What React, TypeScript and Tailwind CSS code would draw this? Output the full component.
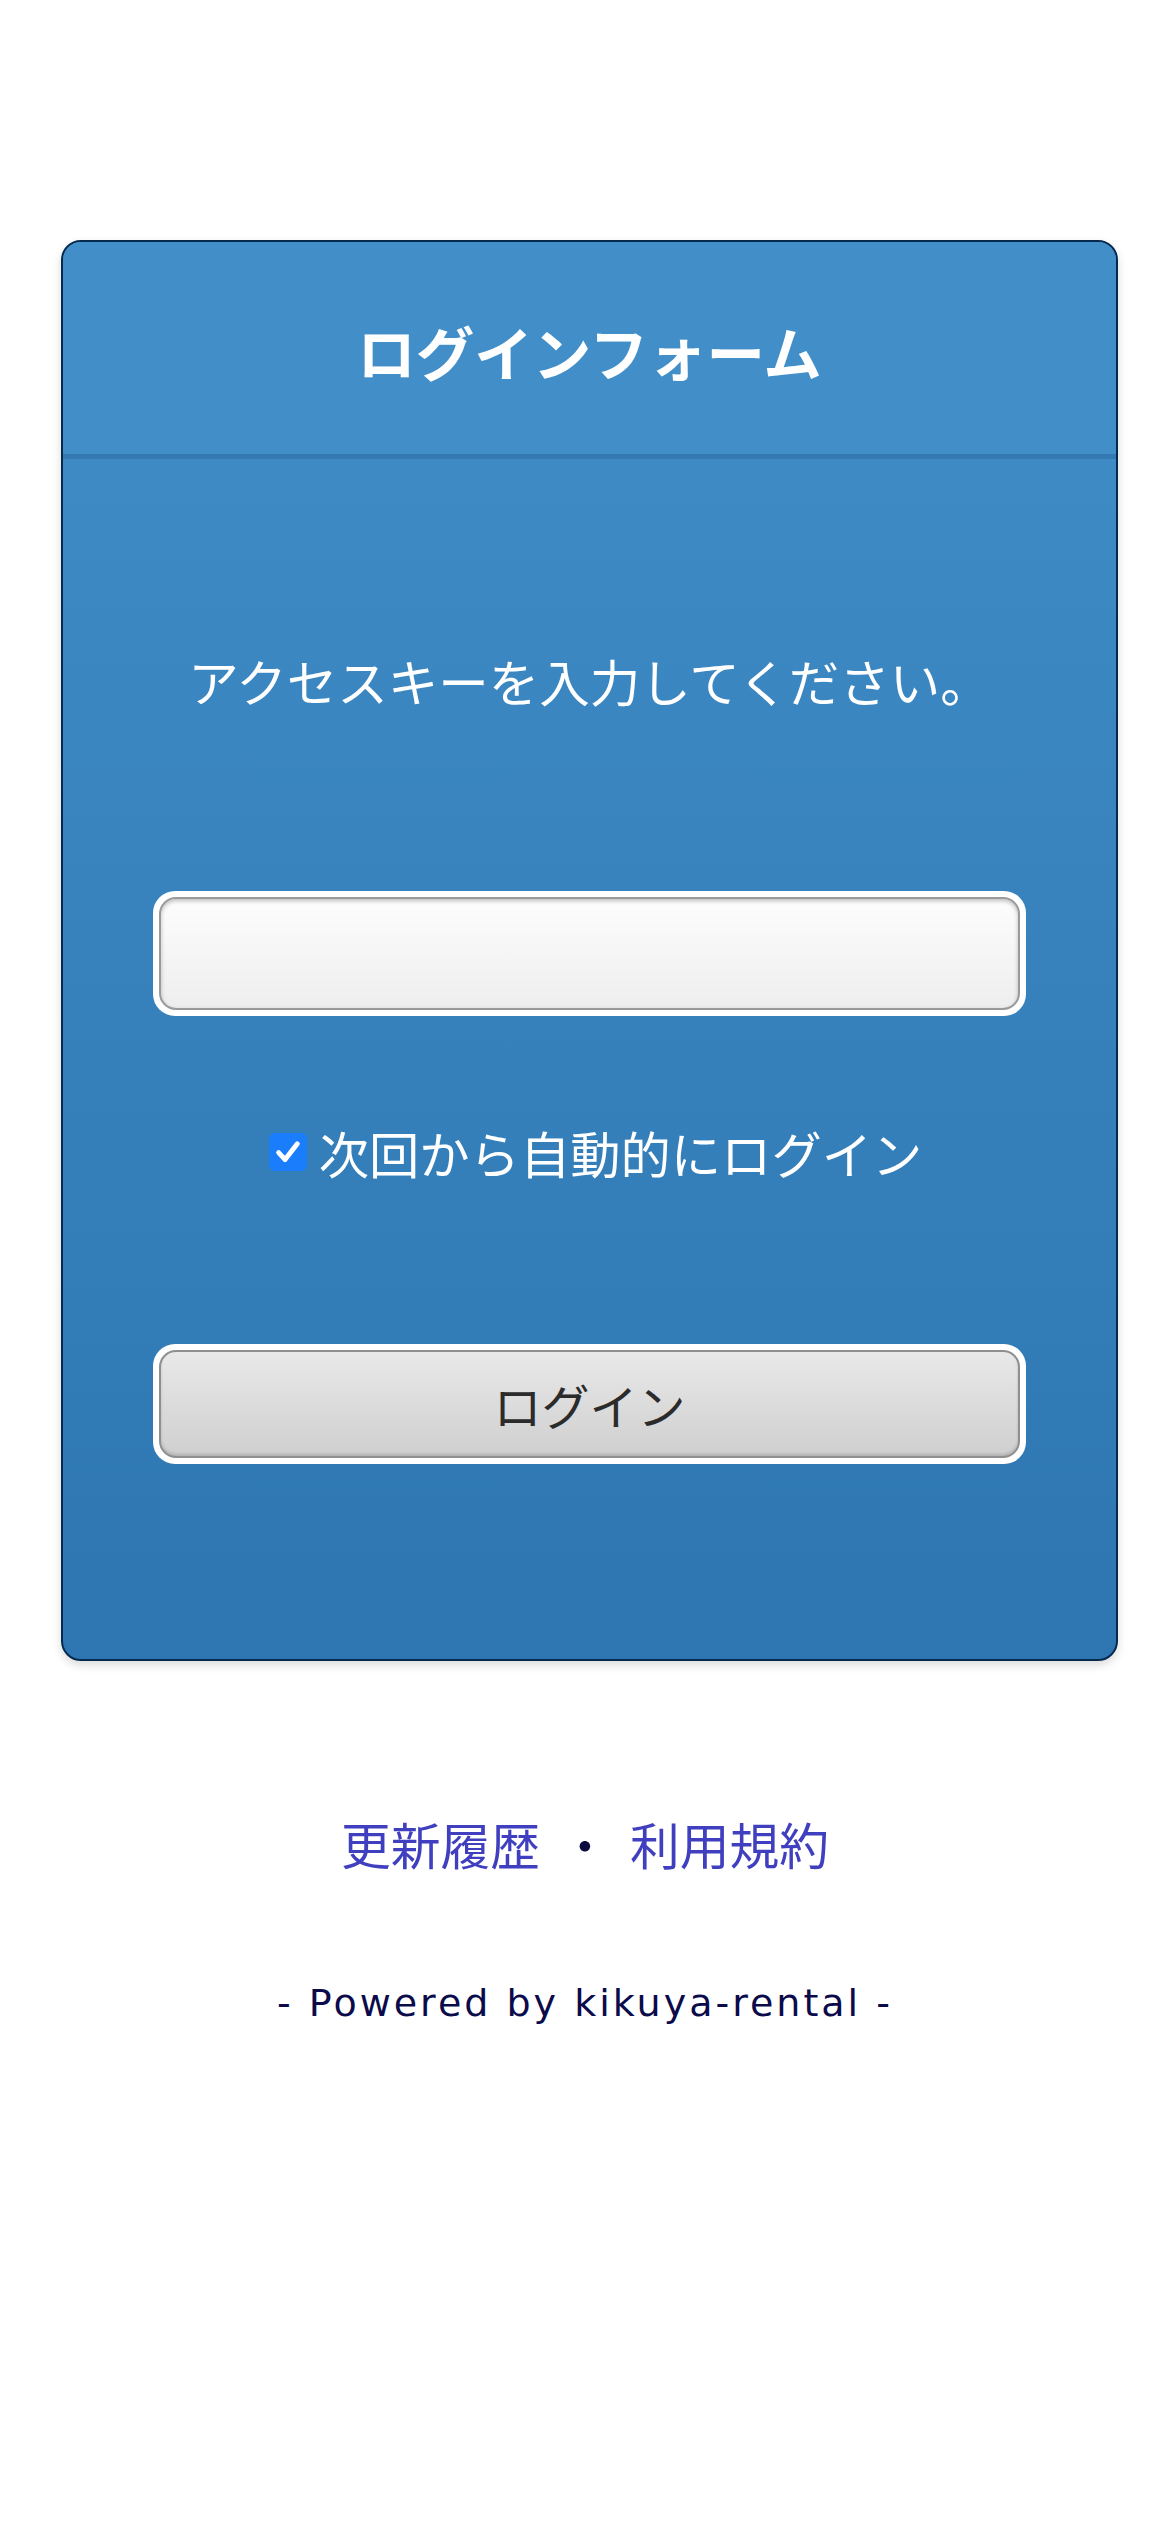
import React from "react";

const jp = "font-['Noto_Sans_CJK_JP','DejaVu_Sans',sans-serif]";

const LoginCard = () => {
  return (
    <div className="ml-[61px] w-[1057px] rounded-[20px] border-2 border-[#062a4e] bg-gradient-to-b from-[#418ec8] to-[#2d76b2] shadow-[0_4px_10px_rgba(0,0,0,0.15)] overflow-hidden">
      {/* Header */}
      <div className="h-[217px] flex items-center justify-center border-b-[5px] border-[#3479b2] bg-[#418ec8]">
        <h1 className={`${jp} text-[58.5px] font-bold text-white leading-none pt-[6px]`}>ログインフォーム</h1>
      </div>

      {/* Body */}
      <div className="px-[90px] pt-[185px] pb-[195px] flex flex-col items-center">
        <p className={`${jp} text-[50.5px] leading-[72px] text-white`}>アクセスキーを入力してください。</p>

        <div className="mt-[175px] w-full rounded-[22px] bg-white p-[6px]">
          <input
            type="password"
            className="block w-full h-[113px] rounded-[17px] border-2 border-[#9a9a9a] bg-gradient-to-b from-[#fdfdfd] to-[#eeeeee] shadow-[inset_0_2px_4px_rgba(0,0,0,0.25)] outline-none"
          />
        </div>

        <label className="mt-[100px] ml-[12px] h-[72px] flex items-center gap-[12px]">
          <span className="w-[38px] h-[38px] rounded-[6px] bg-[#1a7dfc] flex items-center justify-center">
            <svg viewBox="0 0 24 24" className="w-[28px] h-[28px]">
              <path d="M4 12.5 L9.5 18.5 L20 5" fill="none" stroke="white" strokeWidth="4.2" strokeLinecap="round" strokeLinejoin="round" />
            </svg>
          </span>
          <span className={`${jp} text-[50.3px] leading-[72px] text-white`}>次回から自動的にログイン</span>
        </label>

        <div className="mt-[156px] w-full rounded-[22px] bg-white p-[6px]">
          <button className={`${jp} block w-full h-[108px] rounded-[17px] border-2 border-[#8f8f8f] bg-gradient-to-b from-[#e9e9e9] to-[#cfcfcf] text-[48px] text-[#2b2b2b] shadow-[inset_0_-2px_3px_rgba(0,0,0,0.15)]`}>
            ログイン
          </button>
        </div>
      </div>
    </div>
  );
};

export default function App() {
  return (
    <div className="min-h-[2532px] w-[1170px] bg-white pt-[240px]">
      <LoginCard />

      <div className={`${jp} mt-[146px] flex items-center justify-center text-[49.8px] leading-[72px]`}>
        <a className="text-[#3f3fbf]">更新履歴</a>
        <span className="mx-[20px] text-[#0b0b40]">・</span>
        <a className="text-[#3f3fbf]">利用規約</a>
      </div>

      <p className="mt-[96px] text-center font-['DejaVu_Sans',sans-serif] text-[38px] leading-[57px] tracking-[3px] text-[#0b0b4b]">
        - Powered by kikuya-rental -
      </p>
    </div>
  );
}
